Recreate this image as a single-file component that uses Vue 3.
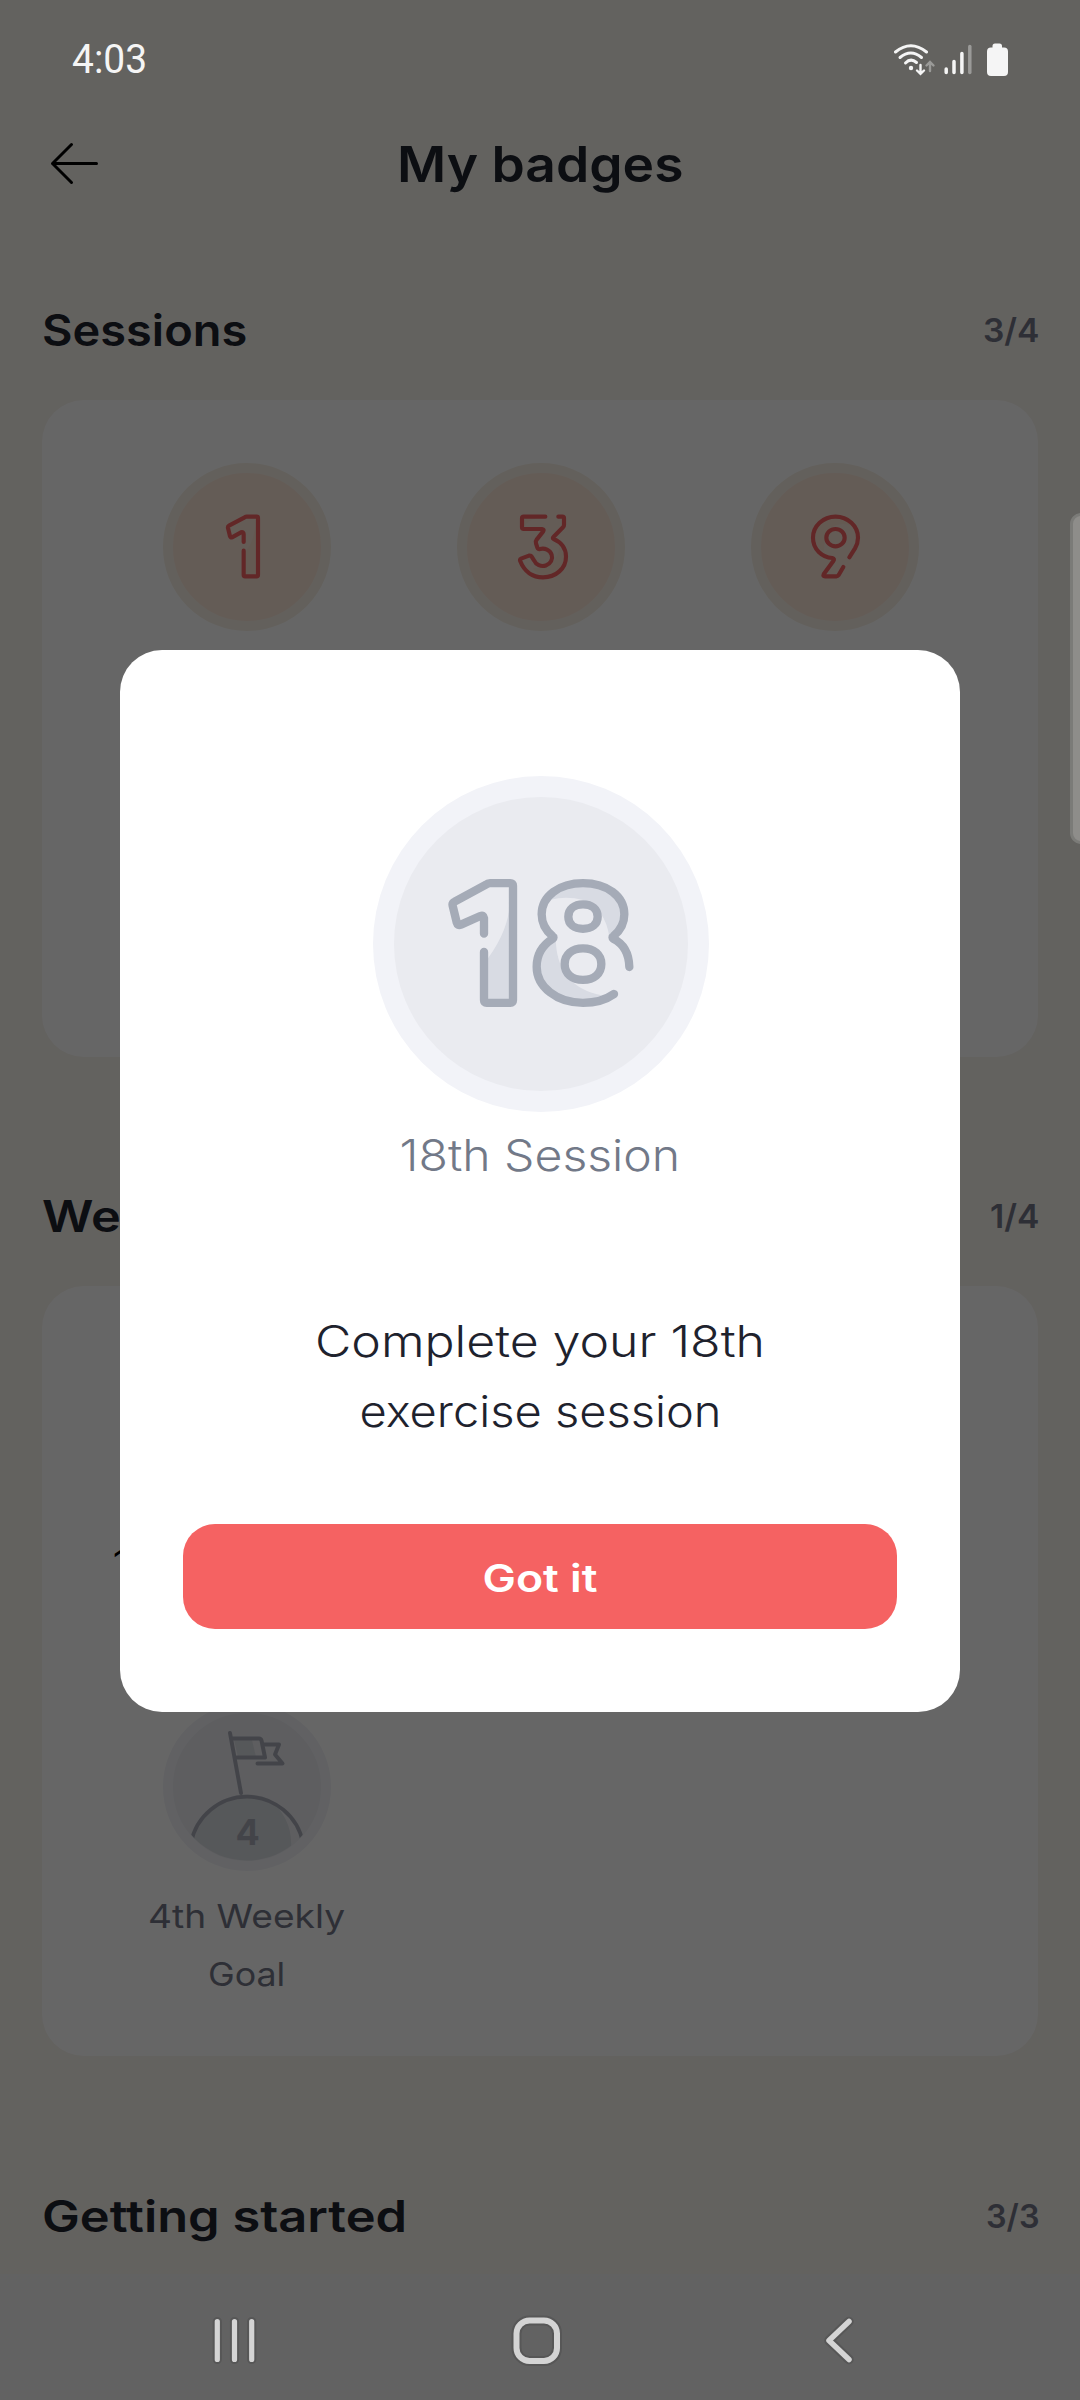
<script setup>
// Stretches a line of text horizontally to a given width.
const vFit = {
  mounted(el, { value }) {
    el.style.transform = `scaleX(${value / el.offsetWidth})`
  },
}

const digitOne =
  'M311,306 V283 Q311,275 303,277 L276,292 Q272,294 270,289 L264,264 Q263,259 267,257 L314,232 Q317,230 320,230 H350 Q354,230 354,234 V405 Q354,409 350,409 H315 Q311,409 311,405 V332'
const digitThree =
  'M148,50 H83 Q78,50 78,55 V82 Q78,87 83,87 H138 Q146,88 141,95 L122,119 Q118,124 120,130 L124,143 Q126,149 132,147 A28,26 0 1 1 114,181 L107,170 Q105,166 99,167 L75,176 Q70,178 73,184 C85,215 110,232 141,232 C180,232 210,205 210,170 C210,145 195,126 173,117 Q168,115 173,110 L201,82 Q204,79 204,75 V55 Q204,50 199,50 H187'
const digitNine =
  'M928,352 L945,325 C952,313 954,303 954,293 A67.5,63 0 1 0 819,293 C819,328 846,352 877,354 Q885,356 880,363 L851,403 Q848,409 855,409 H889 Q893,409 896,405 L910,381 M914,293 A27.500,26 0 1 0 859,293 A27.500,26 0 1 0 914,293'

const sessions = [
  { view: '69 69 504 504', path: digitOne, shade: 'M348,236 V403 H317 V335 Q346,300 348,236', label: '1st Session', fit: 178 },
  { view: '-117 -111 504 504', path: digitThree, shade: 'M84,80 Q95,60 120,56 H84 Z M110,205 Q185,205 190,140 Q206,160 203,180 Q190,224 141,225 Q122,222 110,205', label: '3rd Session', fit: 186 },
  { view: '633 69 504 504', path: digitNine, shade: 'M826,290 Q830,237 887,237 Q920,238 935,256 Q850,235 852,335 Q828,322 826,290', label: '9th Session', fit: 186 },
]
</script>

<template>
  <div class="screen">
    <header class="status">
      <span v-fit="75" class="clock">4:03</span>
      <svg class="status-icons" width="120" height="40" viewBox="890 40 120 40" fill="none" stroke="#f5f5f5" stroke-linecap="round">
        <g stroke-width="3">
          <path d="M895.500,53 Q910.800,40.500 926.500,53" />
          <path d="M900,58.500 Q910.800,49.500 921.500,58.500" />
          <path d="M905.500,64 Q910.800,58.500 916.500,63.500" />
        </g>
        <circle cx="911" cy="69" r="2.2" fill="#f5f5f5" stroke="none" />
        <path d="M920.500,66 V74 M917,71.500 L920.500,74.800 L924,71.500" stroke-width="2.400" />
        <path d="M930,72 V63.500 M926.500,66.500 L930,63 L933.500,66.500" stroke="#9a9a98" stroke-width="2.400" />
        <path d="M946.200,70 V73.500 M954,62.500 V73.500 M961.900,54.500 V73.500" stroke-width="3.500" />
        <path d="M969.800,47.500 V73.500" stroke="#9a9a98" stroke-width="3.500" />
        <path d="M991,48.500 H992.500 V47 Q992.500,44.500 995,44.500 H999.500 Q1002,44.500 1002,47 V48.500 H1004 Q1008,48.500 1008,52.500 V73 Q1008,77 1004,77 H991 Q987,77 987,73 V52.500 Q987,48.500 991,48.500" fill="#f5f5f5" stroke="none" />
      </svg>
    </header>

    <div class="topbar">
      <svg class="back" width="60" height="50" viewBox="45 139 60 50" fill="none" stroke="#000" stroke-width="3" stroke-linecap="round" stroke-linejoin="round">
        <path d="M96.500,163.500 H52.500 M71.500,144.500 L52.500,163.500 L71.500,182.500" />
      </svg>
      <h1 v-fit="286" class="title">My badges</h1>
    </div>

    <section class="section">
      <div class="section-head">
        <h2 v-fit="205">Sessions</h2>
        <span v-fit="56" class="count">3/4</span>
      </div>
      <div class="card card-sessions">
        <div v-for="s in sessions" :key="s.label" class="cell">
          <div class="badge warm">
            <svg :viewBox="s.view">
              <path :d="s.shade" fill="#fae0cc" />
              <path :d="s.path" class="digit" />
            </svg>
          </div>
          <div class="caption"><span v-fit="s.fit">{{ s.label }}</span></div>
        </div>
      </div>
    </section>

    <section class="section">
      <div class="section-head">
        <h2 v-fit="326">Weekly goals</h2>
        <span v-fit="49" class="count">1/4</span>
      </div>
      <div class="card card-weekly">
        <div class="cell first">
          <div class="badge warm"></div>
          <div class="caption dark"><span v-fit="268">1st Weekly Goal</span></div>
        </div>
        <div class="cell goal">
          <div class="badge cool">
            <svg viewBox="0 0 168 168">
              <clipPath id="disc"><circle cx="84" cy="84" r="73.500" /></clipPath>
              <g clip-path="url(#disc)">
                <path d="M30,133 A55.700,55.700 0 0 1 106,96 Q130,116 128,145 L128,168 H30 Z" fill="#d8dbe1" />
                <path d="M71,37 H89 L93,54 H75 Z" fill="#d8dbe1" />
                <g fill="none" stroke="#a8abb7" stroke-width="3.700">
                  <path d="M28,140 A57,57 0 0 1 140,140" />
                </g>
              </g>
              <g fill="none" stroke="#a8abb7" stroke-width="4" stroke-linecap="round" stroke-linejoin="round">
                <path d="M67,30 L78,90 M70,35.500 H96 Q98,35.500 98.500,37.500 L102,54.500 H74" />
                <path d="M100,41.500 H116 L112,51.500 L119.500,60.500 H94.500" />
              </g>
              <text x="84.800" y="141.500" text-anchor="middle" class="hill-number">4</text>
            </svg>
          </div>
          <div class="caption"><span v-fit="197">4th Weekly</span></div>
          <div class="caption"><span v-fit="77">Goal</span></div>
        </div>
      </div>
    </section>

    <section class="section">
      <div class="section-head">
        <h2 v-fit="365">Getting started</h2>
        <span v-fit="54" class="count">3/3</span>
      </div>
    </section>

    <nav class="navbar"></nav>
    <div class="scrim"></div>

    <div class="modal">
      <svg class="modal-badge" width="336" height="336" viewBox="39 48 1008 1008">
        <circle cx="543" cy="552" r="504" fill="#f2f3f8" />
        <circle cx="543" cy="552" r="441" fill="#eaebf0" />
        <path d="M449,430 V718 H384 V595 Q446,510 449,430" fill="#d8dbe3" />
        <path d="M572,419 Q620,407 669,420 Q735,445 748,530 Q793,500 793,463 C793,408 740,369 669,369 C625,369 590,385 572,419" fill="#d8dbe3" />
        <path d="M587,532 Q588,680 725,706 L669,728 C590,728 530,680 530,620 C530,585 550,555 587,532" fill="#d8dbe3" />
        <g fill="none" stroke="#a5abb7" stroke-width="25" stroke-linecap="round" stroke-linejoin="round">
          <path d="M372,521 V474 Q371,464 361,468 L303,494 Q293,498 290,487 L278,437 Q276,429 284,425 L378,374 Q383,369.500 390,369.500 H451 Q459,369.500 459,377 V720 Q459,728.500 451,728.500 H380 Q372,728.500 372,720 V576" />
          <path d="M808,621 C807,580 790,551 760,536 Q755,532 760,529 C781,512 793,490 793,463 C793,408 740,369.500 669,369.500 C598,369.500 545,408 545,463 C545,490 557,512 578,529 Q583,532 578,536 C546,556 530,585 530,620 C530,680 590,728.500 669,728.500 C706,728.500 738,719 762,702" />
          <path d="M669,433 C695,433 713,447 713,470 C713,493 695,506.500 669,506.500 C643,506.500 625,493 625,470 C625,447 643,433 669,433 Z" fill="#eaebf0" />
          <path d="M669,565 C702,565 724,584 724,612 C724,641 702,659.500 669,659.500 C636,659.500 614,641 614,612 C614,584 636,565 669,565 Z" fill="#eaebf0" />
        </g>
      </svg>
      <div class="modal-name"><span v-fit="281">18th Session</span></div>
      <p class="modal-text">
        <span v-fit="450">Complete your 18th</span><br />
        <span v-fit="362">exercise session</span>
      </p>
      <button class="confirm"><span v-fit="115">Got it</span></button>
    </div>

    <div class="edge-handle"></div>

    <svg class="nav-icons" width="1080" height="126" viewBox="0 2274 1080 126" fill="none" stroke-linecap="round" stroke-linejoin="round">
      <g v-for="layer in [{ c: '#575757', w: 4 }, { c: '#d4d4d4', w: 0 }]" :key="layer.c" :stroke="layer.c">
        <path d="M217.300,2321.500 V2359.500 M234.500,2321.500 V2359.500 M251.700,2321.500 V2359.500" :stroke-width="5.2 + layer.w" />
        <rect x="516.500" y="2320.500" width="40.500" height="40.500" rx="13" :stroke-width="6 + layer.w" />
        <path d="M849,2321.500 L829,2340.500 L849,2359.500" :stroke-width="5.5 + layer.w" />
      </g>
    </svg>
  </div>
</template>

<style>
body {
  margin: 0;
}
</style>

<style scoped>
.screen {
  position: relative;
  width: 1080px;
  height: 2400px;
  overflow: hidden;
  background: #f8f4ee;
  font-family: Inter, 'Open Sans', sans-serif;
  color: #1e232d;
}
h1,
h2,
p {
  margin: 0;
}
span,
h1,
h2 {
  display: inline-block;
  white-space: nowrap;
}
.status {
  position: relative;
  z-index: 3;
  height: 118px;
  display: flex;
  justify-content: space-between;
  align-items: center;
  padding: 2px 70px 0 72px;
  box-sizing: border-box;
}
.status-icons {
  margin-bottom: 2px;
}
.clock {
  font: 400 40px/40px Roboto, sans-serif;
  color: #f5f5f5;
  transform-origin: left;
}
.topbar {
  position: relative;
  height: 92px;
  display: flex;
  justify-content: center;
  align-items: center;
  margin-bottom: 90px;
}
.back {
  position: absolute;
  left: 45px;
  top: 21px;
}
.title {
  font-size: 50px;
  font-weight: 570;
  line-height: 60px;
}
.section {
  padding: 0 41px 0 42px;
}
.section-head {
  height: 60px;
  display: flex;
  justify-content: space-between;
  align-items: center;
  margin-bottom: 40px;
}
.section-head h2 {
  font-size: 43.5px;
  line-height: 60px;
  font-weight: 570;
  transform-origin: left;
}
.count {
  font-size: 33px;
  line-height: 60px;
  font-weight: 570;
  color: #737787;
  transform-origin: right;
}
.card {
  box-sizing: border-box;
  width: 996px;
  display: grid;
  grid-template-columns: repeat(3, 294px);
  row-gap: 54px;
  align-content: start;
  padding: 63px 56px 0 58px;
  background: #fff;
  border-radius: 42px;
}
.card-sessions {
  height: 657px;
  margin-bottom: 129px;
}
.card-weekly {
  height: 770px;
  margin-bottom: 130px;
}
.cell {
  display: flex;
  flex-direction: column;
  align-items: center;
}
.first {
  height: 300px;
}
.goal {
  grid-column: 1;
}
.badge {
  box-sizing: border-box;
  width: 168px;
  height: 168px;
  border-radius: 50%;
  margin-bottom: 16px;
  border: 10.5px solid;
}
.badge svg {
  display: block;
  width: 168px;
  height: 168px;
  margin: -10px;
}
.warm {
  background: #fae5d8;
  border-color: #f8f1e6;
}
.cool {
  background: #eaebf0;
  border-color: #f2f3f8;
}
.digit {
  fill: none;
  stroke: #f56262;
  stroke-width: 12.5;
  stroke-linecap: round;
  stroke-linejoin: round;
}
.hill-number {
  font: 650 36px Inter, sans-serif;
  fill: #a8abb7;
}
.caption {
  height: 58px;
  font-size: 33px;
  line-height: 58px;
  font-weight: 440;
  color: #737787;
}
.dark {
  color: #000;
}
.navbar {
  position: absolute;
  left: 0;
  bottom: 0;
  width: 1080px;
  height: 126px;
  background: #f5f5f5;
}
.scrim {
  position: absolute;
  inset: 0;
  z-index: 1;
  background: rgba(0, 0, 0, 0.6);
}
.modal {
  position: absolute;
  z-index: 2;
  left: 120px;
  top: 650px;
  width: 840px;
  height: 1062px;
  box-sizing: border-box;
  padding: 126px 63px 0;
  border-radius: 42px;
  background: #fff;
  display: flex;
  flex-direction: column;
  align-items: center;
}
.modal-badge {
  margin-left: 2px;
}
.modal-name {
  margin-top: 13px;
  font-size: 43.5px;
  line-height: 60px;
  font-weight: 320;
  color: #727988;
}
.modal-text {
  margin-top: 121px;
  text-align: center;
  font-size: 43.5px;
  line-height: 70px;
  font-weight: 330;
  color: #1e222d;
}
.confirm {
  margin-top: 78px;
  width: 714px;
  height: 105px;
  flex: none;
  border: 0;
  border-radius: 32px;
  background: #f56262;
  color: #fff;
  padding: 2px 0 0;
  font: 570 38px/60px Inter, sans-serif;
}
.edge-handle {
  position: absolute;
  z-index: 3;
  right: -12px;
  top: 513px;
  width: 22px;
  height: 331px;
  box-sizing: border-box;
  border: 3px solid #7b7b78;
  border-radius: 12px;
  background: #8e8d8a;
}
.nav-icons {
  position: absolute;
  z-index: 3;
  left: 0;
  bottom: 0;
}
</style>
